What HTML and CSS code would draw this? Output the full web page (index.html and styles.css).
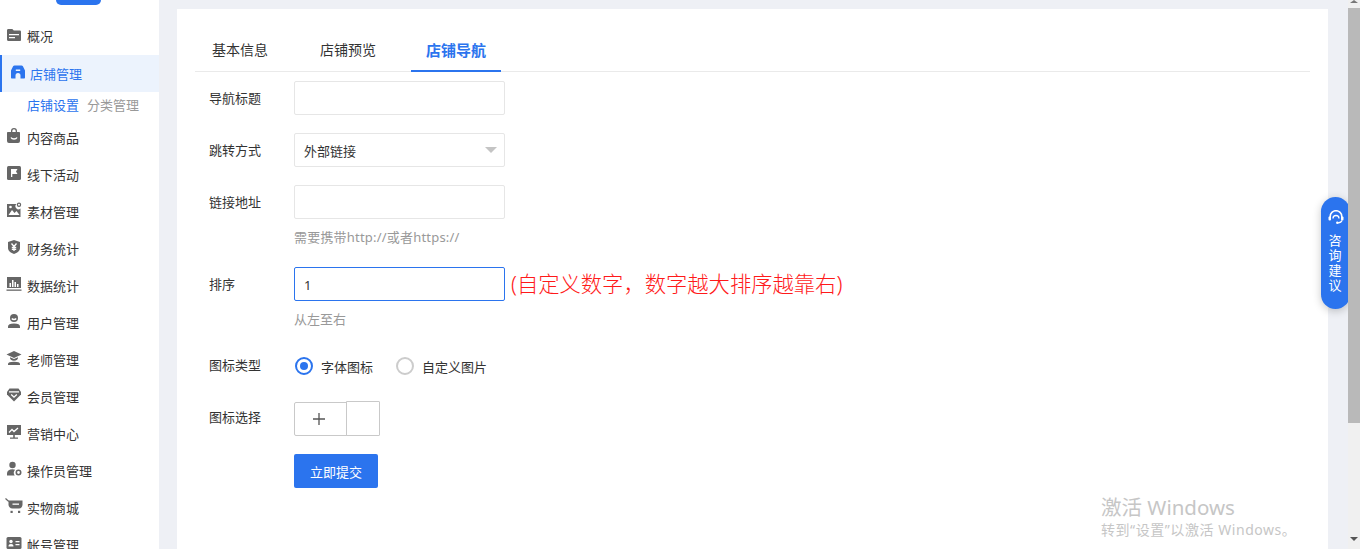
FILE: index.html
```html
<!DOCTYPE html>
<html lang="zh-CN">
<head>
<meta charset="utf-8">
<title>店铺导航</title>
<link rel="stylesheet" href="styles.css">
</head>
<body>
<div class="page">
  <aside class="sidebar">
    <div class="logo"></div>
    <nav>
      <a class="item item-first"><svg class="ico" viewBox="0 0 16 16"><path d="M1 3.500C1 2.700 1.500 2 2.300 2h4l1.500 1.600h6c.8 0 1.200.6 1.200 1.300v8c0 .7-.5 1.100-1.200 1.100H2.200C1.500 14 1 13.500 1 12.800z"/><path class="cut" d="M3 7h10v1.300H3zM3 10h6v1.300H3z"/></svg><span>概况</span></a>
      <a class="item active"><svg class="ico" viewBox="0 0 16 16"><path d="M4.500 1.500h7c.6 0 1.100.3 1.400.8L15 6.500V13.500c0 .6-.4 1-1 1h-3.500V11.500a2.500 2.500 0 0 0-5 0V14.500H2c-.6 0-1-.4-1-1V6.500l2.100-4.200c.3-.5.8-.8 1.400-.8z"/><path class="cut" d="M5.800 5.500h4.400v1.500H5.800z"/></svg><span>店铺管理</span></a>
      <div class="sub"><a class="sub-on">店铺设置</a><a>分类管理</a></div>
      <a class="item"><svg class="ico" viewBox="0 0 16 16"><path d="M5 4V3a3 3 0 0 1 6 0v1h2.200c.5 0 .8.300.8.800V13a2 2 0 0 1-2 2H3a2 2 0 0 1-2-2V4.800c0-.5.300-.8.800-.8zm1.300 0h3.400V3a1.700 1.700 0 0 0-3.400 0z"/><path class="cutl" d="M5 9.500c1 2 5 2 6 0"/></svg><span>内容商品</span></a>
      <a class="item"><svg class="ico" viewBox="0 0 16 16"><rect x="1" y="1" width="14" height="14" rx="1.500"/><path class="cut" d="M5 4h6.500L10 6.500l1.500 2.500H6.300v3H5z"/></svg><span>线下活动</span></a>
      <a class="item"><svg class="ico" viewBox="0 0 16 16"><path d="M1 2h9.500a3 3 0 0 0 4 4.500V15H1z"/><path class="cut" d="M2.500 13l3.500-5 2.500 3 2-2 3 4z"/><circle class="cut" cx="4.500" cy="5" r="1.300"/><circle class="ring" cx="13" cy="2.800" r="1.600"/></svg><span>素材管理</span></a>
      <a class="item"><svg class="ico" viewBox="0 0 16 16"><path d="M8 1l6 2v6c0 3-3 5-6 6-3-1-6-3-6-6V3z"/><path class="cutl" d="M5.500 4.500L8 7.500l2.500-3M8 7.500V12M5.800 8.500h4.400M5.800 10.300h4.400"/></svg><span>财务统计</span></a>
      <a class="item"><svg class="ico" viewBox="0 0 16 16"><path d="M1 1h14v11H1z"/><path class="cut" d="M3.500 7h1.500v4H3.500zM6 4h1.500v7H6zM8.500 6H10v5H8.500zM11 8h1.500v3H11z"/><path d="M0.500 13.500h15v1.300H0.500z"/></svg><span>数据统计</span></a>
      <a class="item"><svg class="ico" viewBox="0 0 16 16"><circle cx="8" cy="5" r="4"/><path class="cutl" d="M5.800 5.500c1 1.300 3.400 1.300 4.400 0"/><path d="M2 15v-1.500C2 11.500 4 10.500 8 10.500s6 1 6 3V15z"/></svg><span>用户管理</span></a>
      <a class="item"><svg class="ico" viewBox="0 0 16 16"><path d="M8 1L15.500 4.500 8 8 .5 4.500z"/><path d="M4 7.200l4 1.900 4-1.900c.3 2-1.500 3.500-4 3.500S3.700 9.200 4 7.200zM2 15v-1c0-1.500 2-2.300 6-2.300s6 .8 6 2.300v1z"/></svg><span>老师管理</span></a>
      <a class="item"><svg class="ico" viewBox="0 0 16 16"><path d="M3.500 1.500h9L15 5v2.500l-7 7-7-7V5z"/><path class="cutl" d="M3 4.800h10M5.200 7.500L8 10.200l2.800-2.700"/></svg><span>会员管理</span></a>
      <a class="item"><svg class="ico" viewBox="0 0 16 16"><path d="M1 1h14v10H1zM7.200 11h1.600v2.500H12v1.200H4v-1.200h3.200z"/><path class="cutl" d="M3 8.500l3-3 2 2 4-3.500"/></svg><span>营销中心</span></a>
      <a class="item"><svg class="ico" viewBox="0 0 16 16"><circle cx="6.500" cy="4" r="3.200"/><path d="M1 14.500v-2C1 10 3 8.300 6.500 8.300c1 0 2 .2 2.700.5a4 4 0 0 0-.5 5.700z"/><circle class="ring2" cx="12.500" cy="11.500" r="2.200"/></svg><span>操作员管理</span></a>
      <a class="item"><svg class="ico cart" viewBox="0 0 18 16"><path class="thin" d="M.5 .5L3.800 3.500"/><path d="M3.500 2.500h14v4c0 2.300-1.200 4-3.500 4H7.500C5 10.500 3.500 8.800 3.500 6.500z"/><path class="cut" d="M7.500 5.500h6.500v1.300H7.500z"/><rect x="5.500" y="12.800" width="2.200" height="2.200"/><rect x="13" y="12.800" width="2.200" height="2.200"/></svg><span>实物商城</span></a>
      <a class="item"><svg class="ico" viewBox="0 0 16 16"><rect x="0.500" y="2" width="15" height="12" rx="1.500"/><circle class="cut" cx="5" cy="6.500" r="1.700"/><path class="cut" d="M2.500 11.500c0-1.800 1-2.500 2.500-2.500s2.500 .7 2.500 2.500zM9.500 6h4v1.200h-4zM9.500 9h4v1.200h-4z"/></svg><span>帐号管理</span></a>
    </nav>
  </aside>

  <main class="main">
    <section class="card">
      <div class="tabs">
        <a class="tab">基本信息</a>
        <a class="tab">店铺预览</a>
        <a class="tab tab-on">店铺导航</a>
      </div>
      <form class="form">
        <div class="row">
          <label class="lbl">导航标题</label>
          <div class="field"></div>
        </div>
        <div class="row">
          <label class="lbl">跳转方式</label>
          <div class="field select"><span class="sel-text">外部链接</span><i class="caret"></i></div>
        </div>
        <div class="row row-tight">
          <label class="lbl">链接地址</label>
          <div class="field"></div>
        </div>
        <p class="help help-url">需要携带http://或者https://</p>
        <div class="row row-tight">
          <label class="lbl">排序</label>
          <div class="field focus">1</div>
          <span class="note">(自定义数字，数字越大排序越靠右)</span>
        </div>
        <p class="help">从左至右</p>
        <div class="row">
          <label class="lbl lbl-up">图标类型</label>
          <div class="radios">
            <span class="radio on"></span><span class="rtext">字体图标</span>
            <span class="radio second"></span><span class="rtext">自定义图片</span>
          </div>
        </div>
        <div class="row row-icon">
          <label class="lbl lbl-up2">图标选择</label>
          <div class="picker">
            <div class="plus"><svg width="12" height="12" viewBox="0 0 12 12"><path d="M0 6h12M6 0v12" stroke="#555" stroke-width="1.300" fill="none"/></svg></div>
            <div class="preview"></div>
          </div>
        </div>
        <div class="row-submit"><button type="button" class="btn">立即提交</button></div>
      </form>
    </section>
    <div class="advice">
      <svg class="headset" width="16" height="14" viewBox="0 0 16 14"><path d="M2.200 8V6.500a5.800 5.800 0 0 1 11.600 0V8" fill="none" stroke="#fff" stroke-width="1.600"/><path d="M5 8.500a3 3 0 1 1 6 0" fill="none" stroke="#fff" stroke-width="1.300"/><rect x="0.500" y="6.500" width="2.500" height="4" rx="1" fill="#fff"/><rect x="13" y="6.500" width="2.500" height="4" rx="1" fill="#fff"/><path d="M14 10.500c-.5 1.500-2 2.200-4 2.300" fill="none" stroke="#fff" stroke-width="1.200"/><circle cx="9.300" cy="12.700" r="1.200" fill="#fff"/></svg>
      <span class="advice-t">咨询建议</span>
    </div>
    <div class="watermark">
      <div class="wm1">激活 Windows</div>
      <div class="wm2">转到“设置”以激活 Windows。</div>
    </div>
  </main>

  <div class="scrollbar">
    <i class="arrow up"></i>
    <div class="thumb"></div>
    <i class="arrow down"></i>
  </div>
</div>
</body>
</html>
```
FILE: styles.css
```css
* { box-sizing: border-box; }
html, body { margin: 0; padding: 0; height: 100%; overflow: hidden; }
body {
  font-family: "Noto Sans", "Noto Sans CJK SC", sans-serif;
  font-size: 13px;
  color: #333;
}
.page { display: flex; height: 549px; overflow: hidden; }

/* sidebar */
.sidebar { width: 159px; flex: none; background: #fff; overflow: hidden; height: 549px; }
.logo { width: 45px; height: 5px; margin: 0 0 13px 56px; background: #2b74ee; border-radius: 0 0 16px 16px; }
.item { display: flex; align-items: center; height: 37px; padding-left: 6px; gap: 5px; color: #333; line-height: 37px; }
.item span { padding-top: 1px; }
.item-first span { padding-top: 0; }
.ico { width: 16px; height: 16px; flex: none; fill: #666; margin-bottom: 3px; }
.cut { fill: #fff; }
.cutl { fill: none; stroke: #fff; stroke-width: 1.300; }
.ring { fill: #fff; stroke: #666; stroke-width: 1.200; }
.ring2 { fill: #fff; stroke: #666; stroke-width: 1.600; }
.thin { fill: none; stroke: #666; stroke-width: 1.200; }
.cart { width: 18px; margin-left: -1px; margin-right: -1px; }
.item.active { background: #ecf3fd; border-left: 2px solid #2b74ee; padding-left: 8px; gap: 4px; color: #2b74ee; }
.active .ico { fill: #2b74ee; }
.active .cut { fill: #ecf3fd; }
.sub { display: flex; gap: 8px; height: 27px; padding-left: 27px; line-height: 27px; color: #999; }
.sub-on { color: #2b74ee; }

/* main */
.main { flex: 1; position: relative; background: #eef0f5; padding: 9px 20px 0 18px; min-width: 0; overflow: hidden; }
.card { background: #fff; height: 540px; padding: 0 18px; }
.tabs { display: flex; gap: 20px; height: 63px; padding-left: 1px; border-bottom: 1px solid #eaeaea; }
.tab { display: block; height: 63px; line-height: 82px; padding: 0 16px; font-size: 14px; color: #333; }
.tab-on { padding: 0 15px; margin-left: -1px; font-size: 15px; font-weight: 700; color: #2b74ee; border-bottom: 2px solid #2b74ee; }
.form { padding: 9px 0 0 14px; }
.row { display: flex; align-items: center; height: 34px; margin-bottom: 18px; }
.row-tight { margin-bottom: 0; }
.lbl { width: 85px; flex: none; color: #333; margin-bottom: 1px; }
.lbl-up { margin-bottom: 3px; }
.lbl-up2 { margin-bottom: 4px; }
.field { width: 211px; height: 34px; border: 1px solid #e6e6e6; border-radius: 2px; background: #fff; padding-left: 9px; line-height: 34px; }
.select { display: flex; align-items: center; justify-content: space-between; padding-right: 7px; }
.sel-text { padding-top: 1px; }
.caret { width: 0; height: 0; border: 6px solid transparent; border-top-color: #c4c4c4; border-bottom-width: 0; }
.focus { border-color: #2b74ee; }
.note { margin-left: 6px; font-size: 21.300px; font-weight: 300; line-height: 34px; color: #ff1a1a; white-space: nowrap; }
.help { margin: 8px 0 20px 85px; line-height: 20px; color: #999; }
.help-url { letter-spacing: .2px; }
.radios { display: flex; align-items: center; padding-left: 1px; }
.radio { width: 18px; height: 18px; border-radius: 50%; border: 2px solid #ccc; background: #fff; flex: none; margin-right: 8px; display: flex; align-items: center; justify-content: center; }
.radio.on { border-color: #2b74ee; }
.radio.on::after { content: ""; width: 8px; height: 8px; border-radius: 50%; background: #2b74ee; }
.radio.second { margin-left: 23px; }
.row-icon { height: 35px; }
.picker { display: flex; align-items: flex-end; height: 35px; }
.plus { width: 53px; height: 34px; padding-right: 4px; border: 1px solid #c9c9c9; border-radius: 2px 0 0 2px; display: flex; align-items: center; justify-content: center; }
.preview { width: 34px; height: 35px; margin-left: -1px; border: 1px solid #c9c9c9; border-radius: 0 1px 1px 0; }
.row-submit { padding-left: 85px; }
.btn { display: block; width: 84px; height: 34px; padding: 0; border: 0; border-radius: 2px; background: #2b74ee; color: #fff; font: inherit; }

/* overlays */
.advice { position: absolute; left: 1162px; top: 197px; width: 29px; height: 112px; border-radius: 15px; background: #2b74ee; box-shadow: 0 2px 8px rgba(0,0,0,.22); display: flex; flex-direction: column; align-items: center; padding-top: 13px; }
.headset { flex: none; }
.advice-t { width: 13px; margin: 9px 0 0 -1px; font-size: 13px; line-height: 15px; color: #fff; }
.watermark { position: absolute; left: 942px; top: 494px; color: #c6c6c6; white-space: nowrap; }
.wm1 { font-size: 20.500px; line-height: 26px; }
.wm2 { font-size: 14px; line-height: 20px; letter-spacing: .55px; }

/* scrollbar */
.scrollbar { width: 12px; flex: none; background: #f0f0f0; display: flex; flex-direction: column; align-items: center; position: relative; }
.arrow { height: 8px; flex: none; width: 0; border-left: 4px solid transparent; border-right: 4px solid transparent; }
.up { height: 3px; margin-bottom: 5px; border-bottom: 3px solid #777; border-top: 0; }
.down { height: 4px; margin-top: 114px; border-top: 4px solid #555; }
.thumb { width: 12px; height: 415px; flex: none; background: #b9b9b9; }
```
